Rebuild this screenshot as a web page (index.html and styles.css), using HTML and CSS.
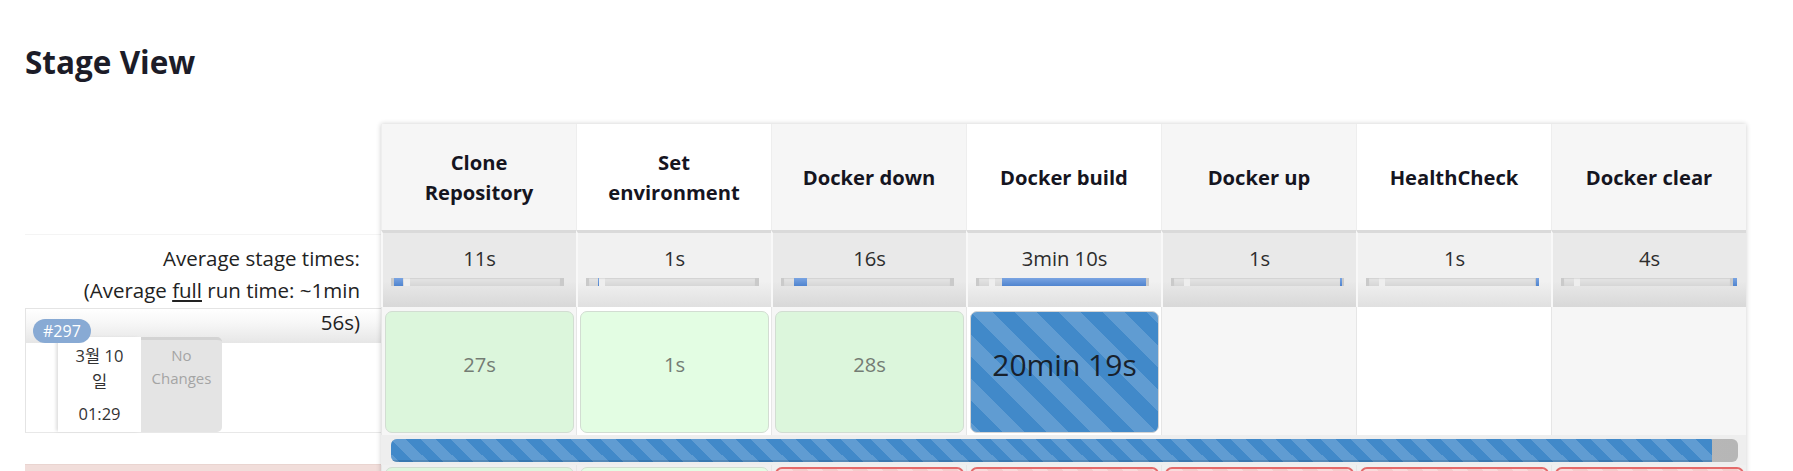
FILE: index.html
```html
<!DOCTYPE html>
<html lang="ko">
<head>
<meta charset="utf-8">
<title>Stage View</title>
<link rel="stylesheet" href="styles.css">
</head>
<body>
<div class="page">
  <h2 class="title">Stage View</h2>
  <div class="sv">
    <div class="labels">
      <div class="lab-head"></div>
      <div class="lab-avg">Average stage times:<br>(Average <u>full</u> run time: ~1min 56s)</div>
      <div class="lab-build">
        <div class="band"><span class="badge">#297</span></div>
        <div class="meta">
          <div class="date"><div class="d">3월 10 일</div><div class="t">01:29</div></div>
          <div class="changes">No Changes</div>
        </div>
      </div>
      <div class="lab-bar"></div>
      <div class="lab-next"></div>
    </div>

    <div class="table">
      <div class="hd odd">Clone Repository</div>
      <div class="hd even">Set environment</div>
      <div class="hd odd">Docker down</div>
      <div class="hd even">Docker build</div>
      <div class="hd odd">Docker up</div>
      <div class="hd even">HealthCheck</div>
      <div class="hd odd">Docker clear</div>

      <div class="avg odd"><div class="t">11s</div><div class="track"><div class="seg" style="margin-left:0;width:9px"></div></div></div>
      <div class="avg even"><div class="t">1s</div><div class="track"><div class="seg" style="margin-left:9px;width:1px"></div></div></div>
      <div class="avg odd"><div class="t">16s</div><div class="track"><div class="seg" style="margin-left:10px;width:13px"></div></div></div>
      <div class="avg even"><div class="t">3min 10s</div><div class="track"><div class="seg" style="margin-left:23px;width:144px"></div></div></div>
      <div class="avg odd"><div class="t">1s</div><div class="track"><div class="seg" style="margin-left:166px;width:2px"></div></div></div>
      <div class="avg even"><div class="t">1s</div><div class="track"><div class="seg" style="margin-left:167px;width:3px"></div></div></div>
      <div class="avg odd"><div class="t">4s</div><div class="track"><div class="seg" style="margin-left:169px;width:4px"></div></div></div>

      <div class="bc odd"><div class="box ok">27s</div></div>
      <div class="bc even"><div class="box ok">1s</div></div>
      <div class="bc odd"><div class="box ok">28s</div></div>
      <div class="bc even"><div class="box run">20min 19s</div></div>
      <div class="bc odd"></div>
      <div class="bc even"></div>
      <div class="bc odd"></div>

      <div class="barrow"><div class="ptrack"><div class="pfill" style="width:1321px"></div></div></div>

      <div class="nc odd"><div class="nbox ok"></div></div>
      <div class="nc even"><div class="nbox ok"></div></div>
      <div class="nc odd"><div class="nbox fail"></div></div>
      <div class="nc even"><div class="nbox fail"></div></div>
      <div class="nc odd"><div class="nbox fail"></div></div>
      <div class="nc even"><div class="nbox fail"></div></div>
      <div class="nc odd"><div class="nbox fail"></div></div>
    </div>
  </div>
</div>
</body>
</html>
```

FILE: styles.css
```css
* { box-sizing: border-box; }

html, body {
  margin: 0;
  height: 471px;
  overflow: hidden;
  background: #fff;
}

body {
  font-family: "Open Sans", "Noto Sans CJK KR", sans-serif;
  color: #333;
}

.page {
  padding-left: 25px;
}

.title {
  margin: 42px 0 0;
  font-family: "Open Sans", "Noto Sans CJK KR", sans-serif;
  font-weight: 700;
  font-size: 31.5px;
  line-height: 40px;
  color: #1c1c28;
}

.sv {
  display: flex;
  align-items: flex-start;
  margin-top: 42px;
}

/* ---------- left labels ---------- */
.labels {
  width: 356px;
  flex: none;
}

.lab-head { height: 110px; }

.lab-avg {
  height: 74px;
  border-top: 1px solid #f4f4f4;
  padding: 7px 21px 0 40px;
  text-align: right;
  font-size: 20.5px;
  line-height: 32px;
  color: #222;
}

.lab-build {
  height: 125px;
  border-top: 1px solid #e4e4e4;
  border-bottom: 1px solid #e8e8e8;
  border-left: 1px solid #e4e4e4;
}

.band {
  height: 34px;
  display: flex;
  align-items: flex-end;
  padding-left: 7px;
  background: linear-gradient(to bottom, #ffffff 0%, #f6f6f6 45%, #e6e6e6 100%);
}

.badge {
  position: relative;
  z-index: 1;
  height: 24px;
  padding: 0 10px;
  border-radius: 12px;
  background: #88aad4;
  color: #fff;
  font-size: 16px;
  line-height: 24px;
}

.meta {
  display: flex;
  height: 95px;
  margin-top: -6px;
  padding-left: 32px;
}

.date {
  width: 83px;
  background: #fff;
  box-shadow: -3px 0 3px -1px rgba(0, 0, 0, 0.13);
  text-align: center;
  padding: 6px 9px 0;
  font-size: 16.5px;
  line-height: 26px;
  color: #333;
}

.date .t { margin-top: 6px; }

.changes {
  width: 81px;
  background: #e4e4e4;
  border-top: 3px solid #d3d3d3;
  border-radius: 0 5px 5px 0;
  text-align: center;
  padding: 4px 5px 0;
  font-size: 15px;
  line-height: 23px;
  color: #a4a4a4;
}

.lab-bar { height: 31px; }

.lab-next {
  height: 40px;
  background: #f1ddda;
  border-top: 1px solid #e9d4d0;
}

/* ---------- table ---------- */
.table {
  display: grid;
  grid-template-columns: repeat(7, 195px);
  grid-template-rows: 106px 77px 128px 30px 40px;
  box-shadow: 0 0 5px rgba(0, 0, 0, 0.2);
}

.hd {
  display: flex;
  align-items: center;
  justify-content: center;
  text-align: center;
  padding: 0 26px;
  font-weight: 700;
  font-size: 20.2px;
  line-height: 30px;
  color: #15151f;
  border-left: 1px solid #eeeeee;
}
.hd.odd { background: #f6f6f6; }
.hd.even { background: #ffffff; }

.avg {
  border-top: 3px solid #dadada;
  border-left: 2px solid #f8f8f8;
  padding-top: 12px;
  text-align: center;
}
.avg.odd { background: linear-gradient(to bottom, #e9e9e9 0%, #e9e9e9 65%, #d8d8d8 100%); }
.avg.even { background: linear-gradient(to bottom, #f1f1f1 0%, #f1f1f1 65%, #e0e0e0 100%); }

.avg .t {
  font-size: 20.2px;
  line-height: 26px;
  color: #2d2d2d;
}

.track {
  display: flex;
  width: 173px;
  height: 8px;
  margin: 7px 0 0 8px;
  background: linear-gradient(to right, transparent 10px, #eeeeee 10px, #eeeeee 16px, transparent 16px), linear-gradient(to bottom, #e6e6e6, #d6d6d6);
  border-left: 3px solid #cacaca;
  border-right: 4px solid #cacaca;
  box-shadow: inset 0 1px 1px rgba(0, 0, 0, 0.08);
}

.seg {
  flex: none;
  height: 8px;
  background: linear-gradient(to bottom, #7aa4e2, #4f84cf);
}

.bc {
  padding: 4px 2px 2px 3px;
  border-left: 1px solid #e6e6e6;
}
.bc.odd { background: #f6f6f6; }
.bc.even { background: #ffffff; }

.box {
  height: 100%;
  border: 1px solid #d2ddd2;
  border-radius: 7px;
  text-align: center;
  padding-top: 38px;
  font-size: 20.2px;
  line-height: 28px;
  color: #747c74;
}
.odd .box.ok { background: #dcf6dc; }
.even .box.ok { background: #e3fde3; }

.box.run,
.pfill {
  background-color: #4189c9;
  background-image: linear-gradient(45deg,
    rgba(255, 255, 255, 0.16) 25%, transparent 25%,
    transparent 50%, rgba(255, 255, 255, 0.16) 50%,
    rgba(255, 255, 255, 0.16) 75%, transparent 75%, transparent);
  background-size: 30px 30px;
}

.box.run {
  border-color: #d4d4d4;
  padding-top: 33px;
  font-size: 30px;
  line-height: 40px;
  color: #18212c;
  background-size: 44px 44px;
}

.barrow {
  grid-column: 1 / -1;
  background: #eeeeee;
  padding: 4px 8px 3px 10px;
}

.ptrack {
  height: 23px;
  border-radius: 6px;
  overflow: hidden;
  display: flex;
  background: linear-gradient(to right, #d2d2d2, #b6b6b6);
}

.pfill {
  flex: none;
  height: 100%;
  box-shadow: inset 0 -2px 0 rgba(0, 0, 0, 0.12);
}

.nc {
  padding: 2px 2px 0 3px;
  border-left: 1px solid #e6e6e6;
  background: #f0f0f0;
}

.nbox {
  height: 40px;
  border-radius: 7px 7px 0 0;
}
.nbox.ok {
  border: 1px solid #d2ddd2;
  background: #ddf6dd;
}
.nc.even .nbox.ok { background: #e3fde3; }
.nbox.fail {
  border: 2px solid #e46a6a;
  background-color: #f5cccc;
  background-image: linear-gradient(45deg,
    rgba(255, 255, 255, 0.3) 25%, transparent 25%,
    transparent 50%, rgba(255, 255, 255, 0.3) 50%,
    rgba(255, 255, 255, 0.3) 75%, transparent 75%, transparent);
  background-size: 30px 30px;
}
```
